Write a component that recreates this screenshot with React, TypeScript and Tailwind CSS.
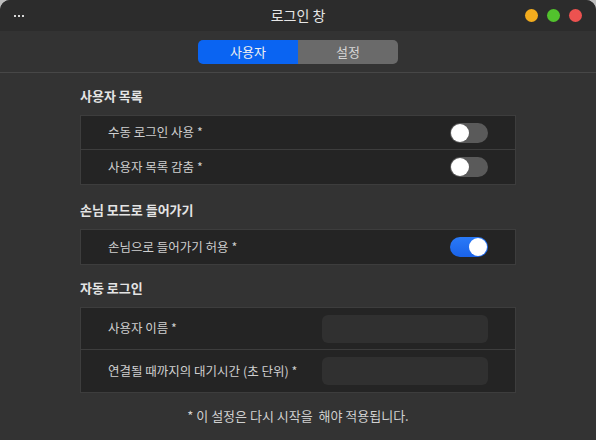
import React, { useState } from 'react';

const FONT = { fontFamily: '"Noto Sans CJK KR", "Noto Sans", sans-serif' };

function Toggle({ on, onChange }: { on: boolean; onChange: () => void }) {
  return (
    <button
      onClick={onChange}
      className={`relative w-[38px] h-[20px] rounded-full shrink-0 ${on ? 'bg-gradient-to-b from-[#2a7af8] to-[#1a62e8]' : 'bg-[#5a5a5a]'}`}
    >
      <span
        className={`absolute top-px w-[18px] h-[18px] rounded-full bg-white ${on ? 'left-[19px]' : 'left-px'}`}
      />
    </button>
  );
}

function Section({ title, className, children }: { title: string; className?: string; children: React.ReactNode }) {
  return (
    <div className={`flex flex-col ${className ?? ''}`}>
      <div className="h-[18px] leading-[18px] text-[13px] font-bold text-[#e4e4e4]">{title}</div>
      <div className="mt-[10px] border border-[#3d3d3d] bg-[#242424] flex flex-col divide-y divide-[#3d3d3d]">
        {children}
      </div>
    </div>
  );
}

function Row({ label, children, tall }: { label: string; children: React.ReactNode; tall?: boolean }) {
  return (
    <div className={`flex items-center justify-between pl-[27px] pr-[27px] ${tall ? 'h-[42px]' : 'h-[34px]'}`}>
      <span className="text-[12.5px] text-[#cfcfcf]">{label}</span>
      {children}
    </div>
  );
}

export default function App() {
  const [manual, setManual] = useState(false);
  const [hide, setHide] = useState(false);
  const [guest, setGuest] = useState(true);
  const [tab, setTab] = useState<'user' | 'settings'>('user');

  return (
    <div className="w-[596px] h-[440px] bg-[#bdbdbd]" style={FONT}>
      <div className="h-full rounded-t-[10px] overflow-hidden bg-[#333333] flex flex-col">
        {/* title bar */}
        <div className="relative h-[31px] bg-[#2c2c2c] flex items-center justify-center shrink-0">
          <div className="absolute left-[14px] top-[15px] flex gap-[2px]">
            <span className="w-[2px] h-[2px] bg-[#d8d8d8]" />
            <span className="w-[2px] h-[2px] bg-[#d8d8d8]" />
            <span className="w-[2px] h-[2px] bg-[#d8d8d8]" />
          </div>
          <span className="text-[14px] text-[#e6e6e6]">로그인 창</span>
          <div className="absolute right-[14px] top-[9px] flex gap-[9px]">
            <span className="w-[13px] h-[13px] rounded-full bg-[#f2ac1e]" />
            <span className="w-[13px] h-[13px] rounded-full bg-[#52c22d]" />
            <span className="w-[13px] h-[13px] rounded-full bg-[#ec5250]" />
          </div>
        </div>

        {/* tabs */}
        <div className="h-[42px] shrink-0 flex justify-center pt-[9px] border-b border-[#474747]">
          <div className="flex h-[24px] w-[200px] rounded-[5px] overflow-hidden text-[13px]">
            <button
              onClick={() => setTab('user')}
              className={`flex-1 ${tab === 'user' ? 'bg-[#0a64f2] text-[#f0f0f0]' : 'bg-[#6a6a6a] text-[#d6d6d6]'}`}
            >
              사용자
            </button>
            <button
              onClick={() => setTab('settings')}
              className={`flex-1 ${tab === 'settings' ? 'bg-[#0a64f2] text-[#f0f0f0]' : 'bg-[#6a6a6a] text-[#d6d6d6]'}`}
            >
              설정
            </button>
          </div>
        </div>

        {/* content */}
        <div className="flex flex-col pl-[80px] pr-[80px] pt-[14px]">
          <Section title="사용자 목록">
            <Row label="수동 로그인 사용 *">
              <Toggle on={manual} onChange={() => setManual(!manual)} />
            </Row>
            <Row label="사용자 목록 감춤 *">
              <Toggle on={hide} onChange={() => setHide(!hide)} />
            </Row>
          </Section>

          <Section title="손님 모드로 들어가기" className="mt-[16px]">
            <Row label="손님으로 들어가기 허용 *">
              <Toggle on={guest} onChange={() => setGuest(!guest)} />
            </Row>
          </Section>

          <Section title="자동 로그인" className="mt-[14px]">
            <Row label="사용자 이름 *" tall>
              <input className="w-[166px] h-[28px] rounded-[6px] bg-[#303030] outline-none px-2 text-[12px] text-[#ddd]" />
            </Row>
            <Row label="연결될 때까지의 대기시간 (초 단위) *" tall>
              <input className="w-[166px] h-[28px] rounded-[6px] bg-[#303030] outline-none px-2 text-[12px] text-[#ddd]" />
            </Row>
          </Section>

          <div className="mt-[14px] text-center text-[13px] text-[#d0d0d0] leading-[18px]">
            * 이 설정은 다시 시작을&nbsp; 해야 적용됩니다.
          </div>
        </div>
      </div>
    </div>
  );
}
